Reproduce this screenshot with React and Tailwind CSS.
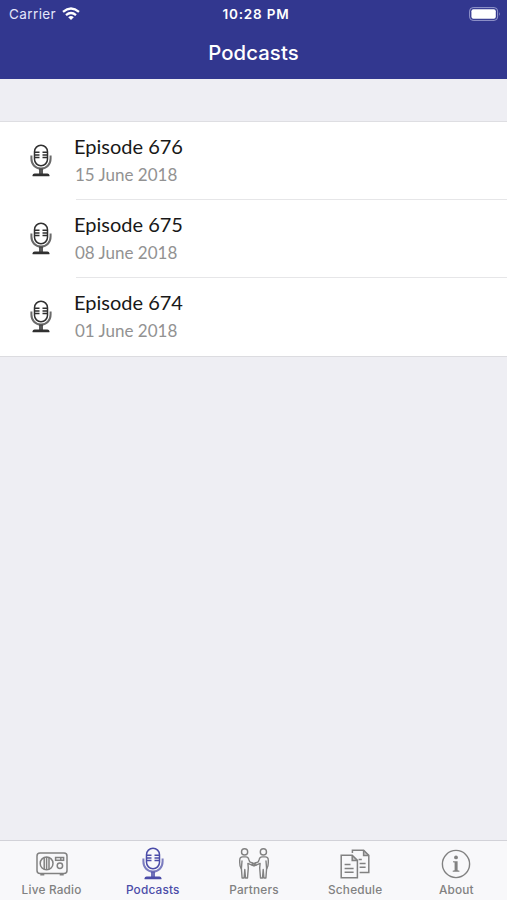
import React from "react";

function MicIcon({ className }) {
  return (
    <svg className={className} width="22" height="33" viewBox="0 0 22 33" fill="none" stroke="currentColor" strokeWidth="1.5">
      <rect x="4.5" y="1.2" width="13" height="20.6" rx="6.5" />
      <path d="M4.5 8.3H9.5M4.5 10.9H9.5M4.5 13.5H9.5M12.5 8.3H17.5M12.5 10.9H17.5M12.5 13.5H17.5" />
      <path d="M1.4 11.6V14.6C1.4 20.4 5.4 24.6 11 24.6S20.6 20.4 20.6 14.6V11.6" strokeWidth="2" strokeOpacity=".72" />
      <path d="M11 24.6V30" strokeWidth="4" strokeOpacity=".8" />
      <path d="M2.6 32.2V31.2Q2.6 29.4 4.6 29.4H17.4Q19.4 29.4 19.4 31.2V32.2Z" fill="currentColor" stroke="none" />
    </svg>
  );
}

function RadioIcon() {
  return (
    <svg width="32" height="24" viewBox="0 0 32 24" fill="none" stroke="currentColor" strokeWidth="1.5">
      <rect x="1" y="1" width="30" height="20.4" rx="3" />
      <circle cx="10.6" cy="11.4" r="6.4" />
      <path d="M8.2 5.8V17M10.6 5V17.8M13 5.8V17" />
      <rect x="19.6" y="5.5" width="8" height="2.8" />
      <path d="M24.8 5.5V8.3" />
      <circle cx="23.9" cy="13.8" r="2.7" />
      <path d="M4.3 22.4H8.3M23.7 22.4H27.7" strokeWidth="2" />
    </svg>
  );
}

function PartnersIcon() {
  return (
    <svg width="32" height="33" viewBox="0 0 32 33" fill="none" stroke="currentColor" strokeWidth="1.4" strokeLinejoin="round" strokeLinecap="round">
      <circle cx="6.6" cy="4.9" r="3.1" />
      <circle cx="25.4" cy="4.9" r="3.1" />
      <path d="M3.2 21.5Q1.7 19.5 1.7 15.5V13.4Q1.7 9.9 4.6 9.9H8Q10.2 9.9 10.8 12.4L11.7 14.8L16 16.6L20.3 14.8L21.2 12.4Q21.8 9.9 24 9.9H27.4Q30.3 9.9 30.3 13.4V15.5Q30.3 19.5 28.8 21.5" />
      <path d="M4 14L3.4 21.5L4.1 31H6.1L6.8 22.5L7.5 31H9.5L10.3 21L9.9 16.4L15.2 18.7H16.8L22.1 16.4L21.7 21L22.5 31H24.5L25.2 22.5L25.9 31H27.9L28.6 21.5L28 14" />
      <path d="M14.2 16.2L18 18.1M13.8 17.8L17.8 15.8" />
    </svg>
  );
}

function ScheduleIcon() {
  return (
    <svg width="30" height="30" viewBox="0 0 30 30" fill="none" stroke="currentColor" strokeWidth="1.5">
      <path d="M1.2 6.2H12.2L17.4 11.4V28.7H1.2Z" />
      <path d="M12.2 6.2V11.4H17.4" />
      <path d="M4.6 15.6H10.5M4.6 19.4H13.6M4.6 23.2H13.6" />
      <path d="M12.4 4V1.2H23.6L28.8 6.4V23.6H19.6" />
      <path d="M23.6 1.2V6.4H28.8M18.6 10.5H21.8M19.6 14.4H25.6M19.6 18.3H25.6" />
      <path d="M12.2 6.2L17.4 11.4H12.2ZM23.6 1.2L28.8 6.4H23.6Z" fill="currentColor" fillOpacity=".4" stroke="none" />
    </svg>
  );
}

function AboutIcon() {
  return (
    <svg width="30" height="30" viewBox="0 0 30 30" fill="none" stroke="currentColor">
      <circle cx="15" cy="15" r="13.6" strokeWidth="1.4" />
      <circle cx="15" cy="8.4" r="1.9" fill="currentColor" stroke="none" />
      <path d="M12 12.2H16.6V21.2L18.4 21.8V22.8H11.7V21.8L13.6 21.2V13.6L12 13.2Z" fill="currentColor" stroke="none" />
    </svg>
  );
}

const episodes = [
  { title: "Episode 676", date: "15 June 2018" },
  { title: "Episode 675", date: "08 June 2018" },
  { title: "Episode 674", date: "01 June 2018" },
];

const tabs = [
  { label: "Live Radio", icon: <RadioIcon /> },
  { label: "Podcasts", icon: <MicIcon />, active: true },
  { label: "Partners", icon: <PartnersIcon /> },
  { label: "Schedule", icon: <ScheduleIcon /> },
  { label: "About", icon: <AboutIcon /> },
];

export default function App() {
  return (
    <div className="flex h-[900px] w-[507px] flex-col overflow-hidden bg-[#eeeef3] font-['Inter',sans-serif]">
      <header className="h-[79px] shrink-0 bg-[#32378f] text-white">
        <div className="grid h-[27px] grid-cols-[1fr_auto_1fr] items-center pl-[9px] pr-[6px]">
          <div className="flex items-center gap-[6px]">
            <span className="pt-px text-[13.5px] tracking-[0.4px] text-[#e4e6fa]">Carrier</span>
            <svg width="18" height="14" viewBox="0 0 18 14" fill="none" stroke="white" strokeWidth="2.3">
              <path d="M1 4.9Q9 -1.9 17 4.9" />
              <path d="M4 8.1Q9 3.9 14 8.1" />
              <path d="M9 12.9L6.2 10.2Q9 8 11.8 10.2Z" fill="white" stroke="none" />
            </svg>
          </div>
          <span className="pl-[2px] pt-px text-[13.5px] font-semibold tracking-[0.8px]">10:28 PM</span>
          <svg className="justify-self-end" width="32" height="14" viewBox="0 0 32 14">
            <rect x="0.6" y="0.6" width="28" height="12.8" rx="3.5" fill="none" stroke="#9699cd" strokeWidth="1" />
            <rect x="2.4" y="2.3" width="24.4" height="9.4" rx="2" fill="white" />
            <path d="M30 5Q31.6 7 30 9Z" fill="#9699cd" />
          </svg>
        </div>
        <h1 className="pt-[12px] text-center text-[20.3px] font-medium leading-[28px] tracking-[0.1px]">Podcasts</h1>
      </header>

      <main className="flex-1 pt-[43px]">
        <ul className="border-b border-[#dcdce0] bg-white shadow-[0_-1px_0_#dedee2]">
          {episodes.map((episode, i) => (
            <li key={episode.title} className="flex h-[78px] pl-[30px]">
              <MicIcon className="mt-[22px] shrink-0 text-[#303030]" />
              <div className="ml-[22px] flex flex-1 flex-col font-['Lato',sans-serif]">
                <div className="pt-[10px] text-[20px] leading-[28px] text-[#181818]">{episode.title}</div>
                <div className="pl-px pt-px text-[17px] leading-[28px] text-[#929292]">{episode.date}</div>
                {i < 2 && <hr className="ml-[2px] mt-auto border-[#e6e6e8]" />}
              </div>
            </li>
          ))}
        </ul>
      </main>

      <nav className="grid h-[60px] shrink-0 grid-cols-5 border-t border-[#d2d2d8] bg-[#f8f8fa] pl-px">
        {tabs.map((tab) => (
          <div key={tab.label} className={`flex flex-col items-center pt-[6px] ${tab.active ? "text-[#4b4ca8]" : "text-[#818181]"}`}>
            <div className="flex h-[33px] items-center">{tab.icon}</div>
            <span className="mt-[2px] text-[11.8px] font-medium leading-[16px] tracking-[0.2px]">{tab.label}</span>
          </div>
        ))}
      </nav>
    </div>
  );
}
